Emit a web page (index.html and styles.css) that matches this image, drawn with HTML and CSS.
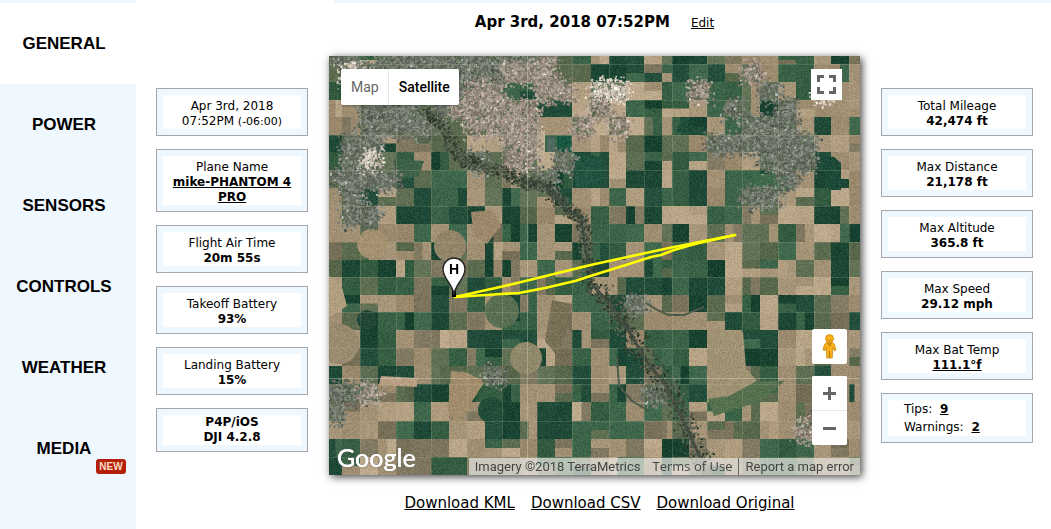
FILE: index.html
```html
<!DOCTYPE html>
<html lang="en">

<head>
  <meta charset="UTF-8" />
  <meta name="viewport" content="width=device-width, initial-scale=1" />
  <title>Flight - Apr 3rd, 2018 07:52PM</title>
  <link rel="stylesheet" href="styles.css">
</head>

<body>
  <div class="layout">
    <nav class="sidebar">
      <a href="#general" class="active">GENERAL</a>
      <a href="#power">POWER</a>
      <a href="#sensors">SENSORS</a>
      <a href="#controls">CONTROLS</a>
      <a href="#weather">WEATHER</a>
      <a href="#media">MEDIA<span class="badge">NEW</span></a>
    </nav>

    <main class="content">
      <div class="top-strip"></div>

      <div class="columns">
        <section class="stats">
          <div class="card"><div>Apr 3rd, 2018<br>07:52PM <small>(-06:00)</small></div></div>
          <div class="card"><div>Plane Name<br><a href="#plane">mike-PHANTOM 4 PRO</a></div></div>
          <div class="card"><div>Flight Air Time<br><b>20m 55s</b></div></div>
          <div class="card"><div>Takeoff Battery<br><b>93%</b></div></div>
          <div class="card"><div>Landing Battery<br><b>15%</b></div></div>
          <div class="card tight"><div><b>P4P/iOS<br>DJI 4.2.8</b></div></div>
        </section>

        <section class="flight">
          <div class="title">
            <h1>Apr 3rd, 2018 07:52PM</h1>
            <a href="#edit">Edit</a>
          </div>

          <div class="map">
            <canvas id="terrain" class="terrain" width="531" height="419"></canvas>
            <svg class="overlay" viewBox="0 0 531 419" preserveAspectRatio="xMidYMid slice">
              <g fill="none" stroke="#ffff00" stroke-width="2.6" stroke-linecap="round" stroke-linejoin="round">
                <path d="M126 241 L180 229 L266 208 L340 192 L406 179" />
                <path d="M126 241 L172 238 L190 237 L216 232 L246 225 L271 217 L300 208 L322 201 L332 199 L345 194 L366 188 L406 179" />
              </g>
              <path d="M123 233 h4 v8 h-4z" fill="#000" />
              <path d="M125 239 C124 228 114 223 114 213 A11 11 0 0 1 136 213 C136 223 126 228 125 239z" fill="#fff" stroke="#222" stroke-width="1.4" />
              <text x="125" y="218" text-anchor="middle" class="pin-label">H</text>
            </svg>

            <div class="map-type">
              <button type="button">Map</button>
              <button type="button" class="selected">Satellite</button>
            </div>

            <button type="button" class="map-btn fullscreen" aria-label="Fullscreen">
              <svg width="19" height="19" viewBox="0 0 19 19" fill="none" stroke="#666" stroke-width="3">
                <path d="M1.500 7V1.500H7M12 1.500h5.500V7M17.500 12v5.500H12M7 17.500H1.500V12" />
              </svg>
            </button>

            <div class="map-tools">
              <button type="button" class="map-btn pegman" aria-label="Street View">
                <svg width="15" height="25" viewBox="0 0 15 25" stroke="#c78a14" stroke-width=".8">
                  <path d="M4.500 8.500h6l2 1.800 1.500 5.700-1.800.8-1.400-3.500-.6 10.700H4.800l-.6-10.700-1.400 3.500L1 16l1.500-5.700z" fill="#fbb117" />
                  <path d="M7.500 17v7" stroke="#9c6a10" />
                  <path d="M5 9l2.500 3.500L10 9z" fill="#e28c10" />
                  <circle cx="7.500" cy="4.600" r="4" fill="#fbb117" />
                  <path d="M4.500 5.500q3 2.500 6 0" fill="none" />
                </svg>
              </button>
              <div class="zoom">
                <button type="button" aria-label="Zoom in">
                  <svg width="13" height="13" viewBox="0 0 13 13"><path d="M0 5h5V0h3v5h5v3H8v5H5V8H0z" fill="#666" /></svg>
                </button>
                <button type="button" aria-label="Zoom out">
                  <svg width="13" height="13" viewBox="0 0 13 13"><path d="M0 5h13v3H0z" fill="#666" /></svg>
                </button>
              </div>
            </div>

            <div class="logo">Google</div>
            <div class="credits">
              <span>Imagery ©2018 TerraMetrics</span>
              <a href="#terms" class="terms">Terms of Use</a>
              <a href="#report" class="report">Report a map error</a>
            </div>
          </div>

          <div class="downloads">
            <a href="#kml">Download KML</a>
            <a href="#csv">Download CSV</a>
            <a href="#original">Download Original</a>
          </div>
        </section>

        <section class="stats">
          <div class="card"><div>Total Mileage<br><b>42,474 ft</b></div></div>
          <div class="card"><div>Max Distance<br><b>21,178 ft</b></div></div>
          <div class="card"><div>Max Altitude<br><b>365.8 ft</b></div></div>
          <div class="card"><div>Max Speed<br><b>29.12 mph</b></div></div>
          <div class="card"><div>Max Bat Temp<br><a href="#temp">111.1°f</a></div></div>
          <div class="card notes"><div>Tips: <a href="#tips">9</a><br>Warnings: <a href="#warnings">2</a></div></div>
        </section>
      </div>
    </main>
  </div>

  <script src="map.js"></script>
</body>

</html>
```

FILE: styles.css
```css
* {
  box-sizing: border-box;
}

body {
  margin: 0;
  background: #fff;
  color: #000;
  font-family: Verdana, "DejaVu Sans", sans-serif;
  font-size: 12px;
  line-height: 15px;
}

a {
  color: inherit;
}

button {
  padding: 0;
  border: none;
  background: #fff;
  cursor: pointer;
}

.layout {
  display: flex;
  min-height: 100vh;
}

.sidebar {
  flex: 0 0 136px;
  padding-top: 3px;
  background: #f0f8ff;
}

.sidebar a {
  position: relative;
  display: flex;
  align-items: center;
  justify-content: center;
  height: 81px;
  padding-right: 8px;
  font-family: "Liberation Sans", Arial, sans-serif;
  font-size: 17px;
  font-weight: bold;
  text-decoration: none;
}

.sidebar a.active {
  background: #fff;
}

.badge {
  position: absolute;
  right: 10px;
  bottom: 15px;
  width: 30px;
  border-radius: 3px;
  background: #b4200c;
  color: #fbdcc0;
  font-size: 10px;
  line-height: 15px;
  text-align: center;
}

.content {
  flex: 1;
  min-width: 0;
}

.top-strip {
  height: 3px;
  margin-left: 198px;
  background: #f0f8ff;
}

.columns {
  display: flex;
  gap: 21px;
  padding: 0 18px 0 20px;
}

.stats {
  flex: 0 0 152px;
  display: flex;
  flex-direction: column;
  gap: 13px;
  padding-top: 85px;
}

.card {
  padding: 6px;
  border: 1px solid #a2a8ad;
  background: #f0f8ff;
  text-align: center;
}

.card div {
  padding-top: 4px;
  background: #fff;
}

.card small {
  font-size: 11px;
}

.card a {
  font-weight: bold;
}

.card.tight div {
  padding: 0;
}

.card.notes div {
  padding: 0 16px;
  line-height: 18px;
  text-align: left;
}

.card.notes a {
  margin-left: 4px;
}

.flight {
  flex: 1;
  min-width: 0;
}

.title {
  display: flex;
  align-items: baseline;
  justify-content: center;
  gap: 21px;
  margin-bottom: 14px;
  line-height: 38px;
}

.title h1 {
  margin: 0;
  font-size: 15px;
}

.map {
  position: relative;
  height: 419px;
  background: #5f7253;
  box-shadow: 2px 2px 8px #444;
  font-family: Roboto, Arial, sans-serif;
}

.terrain,
.overlay {
  position: absolute;
  top: 0;
  left: 0;
  width: 100%;
  height: 100%;
  object-fit: cover;
}

.pin-label {
  font-family: "Liberation Sans", Arial, sans-serif;
  font-size: 14px;
  font-weight: bold;
}

.map-type {
  position: absolute;
  top: 13px;
  left: 12px;
  display: flex;
  border-radius: 2px;
  overflow: hidden;
  box-shadow: 0 1px 3px rgba(0, 0, 0, 0.3);
}

.map-type button {
  height: 36px;
  padding: 0 9px 0 10px;
  color: #666;
  font-family: inherit;
  font-size: 14px;
}

.map-type .selected {
  border-left: 1px solid #e6e6e6;
  color: #000;
  font-weight: 500;
}

.map-btn {
  display: flex;
  align-items: center;
  justify-content: center;
}

.fullscreen {
  position: absolute;
  top: 13px;
  right: 18px;
  width: 31px;
  height: 31px;
}

.map-tools {
  position: absolute;
  right: 13px;
  bottom: 30px;
  display: flex;
  flex-direction: column;
  gap: 12px;
  width: 35px;
}

.pegman {
  height: 35px;
  border-radius: 2px;
}

.zoom {
  display: flex;
  flex-direction: column;
  border-radius: 2px;
  background: #fff;
  overflow: hidden;
}

.zoom button {
  display: flex;
  align-items: center;
  justify-content: center;
  height: 34px;
}

.zoom button + button {
  height: 35px;
  border-top: 1px solid #e6e6e6;
}

.logo {
  position: absolute;
  left: 8px;
  bottom: 4px;
  color: #fff;
  font-family: Lato, sans-serif;
  font-size: 25px;
  font-weight: 500;
  line-height: 28px;
  text-shadow: 0 0 1px #fff, 0 0 2px rgba(0, 0, 0, 0.5);
}

.credits {
  position: absolute;
  right: 0;
  bottom: 0;
  display: flex;
  background: rgba(235, 235, 230, 0.7);
  color: #444;
  font-size: 13px;
  line-height: 17px;
  white-space: nowrap;
}

.credits span,
.credits a {
  padding: 0 6px;
  text-decoration: none;
}

.credits .terms {
  font-family: "Open Sans", sans-serif;
}

.credits .report {
  border-left: 1px solid #666;
}

.downloads {
  display: flex;
  justify-content: center;
  gap: 16px;
  padding: 18px 0 18px 10px;
  font-size: 15px;
  line-height: 20px;
}
```

FILE: map.js
```js
// Satellite ground cover, one character per quarter-section of farmland
// D/G/g greens, t/l/b dry fields, u/U/w built-up areas
const rows = [
  'uuGuuuuuuuuuUgGlDDlgDDgbttGGtDb',
  'gwuuuuuuuuUUUggDDDbGDGDtUtGGtGt',
  'GtuuuuuuUUGGUUlwwltGGUGGtutGwtt',
  'ltuuuguUUUUUDDlUlGDGGtGutDutttt',
  'ttuuuuggUUUUttUlUlGtDDtGuuutDtG',
  'DuutbgggllUUGGtttgDggtuuuuuutlt',
  'GuwgGtGgugUUluDDlgGgGGbtluuuDtt',
  'uuuuDgGGtgtguGDDlDDlGDtGGGutDlt',
  'tuDlgDGDtgGggDttGlDGGDtGuutlGlt',
  'tuulDDGDDtDgtgtGbbDlllGGtgllDgt',
  'ttgttGtGtbDDtDbGGGtgDtgbgtGtlGD',
  'bgttgtDgtltGttgDGtGbGGtlggGtgDg',
  'gDGDGgbbgtbtGtGDttGGGGDlgGtgtDg',
  'tGgGGbGgDGbGgGGtgDDDGDDlbgttlDt',
  'lDtttbDbGtDGtlGGDutgbDgtDlDDgbt',
  'tgDGDGDgbtDGtbtGGgttttgDGlDDgbD',
  'btDGtbllDDDDtbtGDtGGGDttDDtlbtt',
  'lbDGbtgGGDgDlbGtDDGGGlttDDttgtb',
  'DtgDDtgggugbggDttDbGDGttgGtgDtt',
  'uuUtgDDtGGGttbDtDbuGGDttGGtbgtt',
  'ubtllGlttDDtDDbGGtGgGlGGgltbutt',
  'tttbGDGtlDDtDDGGGGbtgtgggltUutt',
  'GGblbbbltGgtGbGttblDDbtlbGGGtbt',
  'DGltbbGGbbbtGGgtGGtDgbttbGGgttg'
];

const colX = [0, 13, 31, 49, 67, 85, 102, 120, 138, 156, 173, 191, 208, 226, 243, 262,
  280, 297, 315, 333, 343, 360, 378, 396, 413, 431, 449, 467, 485, 502, 520, 531];
const rowY = [0, 8, 26, 44, 61, 79, 96, 114, 132, 150, 168, 186, 204, 221, 239, 256,
  274, 292, 310, 328, 346, 365, 383, 401, 419];

const colors = {
  D: [30, 72, 54],
  G: [57, 98, 70],
  g: [92, 109, 82],
  t: [160, 143, 114],
  l: [182, 163, 134],
  b: [124, 116, 92],
  u: [112, 118, 108],
  U: [160, 146, 134],
  w: [212, 200, 188]
};

const canvas = document.getElementById('terrain');
const ctx = canvas.getContext('2d');

let seed = 7;
function rand() {
  seed = (seed * 16807) % 2147483647;
  return seed / 2147483647;
}

function shade(c, amount) {
  return `rgb(${c.map(v => Math.round(v + amount)).join(',')})`;
}

function drawFields() {
  rows.forEach((row, r) => {
    [...row].forEach((key, c) => {
      const x = colX[c], y = rowY[r];
      const w = colX[c + 1] - x, h = rowY[r + 1] - y;
      const town = 'uUw'.includes(key);
      ctx.fillStyle = shade(colors[town ? 'g' : key], rand() * 16 - 8);
      ctx.fillRect(x, y, w, h);

      // some sections are split into smaller fields
      if (!town && rand() < 0.25) {
        const other = key === 'D' ? 'G' : 'Dgtlb'[Math.floor(rand() * 5)];
        ctx.fillStyle = shade(colors[other], rand() * 12 - 6);
        if (rand() < 0.5) ctx.fillRect(x, y + h / 2, w, h / 2);
        else ctx.fillRect(x, y, w / 2, h);
      }
    });
  });
}

// blocks spill over the section edges so that towns have ragged borders
function drawTowns() {
  rows.forEach((row, r) => {
    [...row].forEach((key, c) => {
      if (!'uUw'.includes(key)) return;
      const w = colX[c + 1] - colX[c], h = rowY[r + 1] - rowY[r];
      for (let n = 0; n < w * h / 2; n++) {
        const x = colX[c] + w / 2 + (rand() + rand() - 1) * w * 0.9;
        const y = rowY[r] + h / 2 + (rand() + rand() - 1) * h * 0.9;
        const bright = rand() < 0.05 ? 50 : 0;
        ctx.fillStyle = shade(colors[key], rand() * 70 - 35 + bright);
        ctx.fillRect(x, y, 1 + rand() * 2, 1 + rand() * 2);
      }
    });
  });
}

function drawPatch(points, color) {
  ctx.fillStyle = color;
  ctx.beginPath();
  points.forEach(([x, y]) => ctx.lineTo(x, y));
  ctx.fill();
}

function drawCircle(x, y, r, color) {
  ctx.fillStyle = color;
  ctx.beginPath();
  ctx.arc(x, y, r, 0, Math.PI * 2);
  ctx.fill();
}

// pivot irrigation and other irregular fields
function drawIrregular() {
  drawCircle(10, 288, 20, '#988b70');
  drawCircle(197, 302, 16, '#8e8769');
  drawCircle(173, 255, 17, '#586f51');
  drawCircle(38, 264, 10, '#214536');
  drawCircle(162, 354, 13, '#204c38');
  drawCircle(43, 188, 15, '#a3916f');
  drawCircle(121, 190, 16, '#91856a');
  drawPatch([[122, 315], [136, 316], [156, 325], [142, 347], [128, 367], [119, 355]], '#a18d6c');
  drawPatch([[380, 275], [414, 276], [417, 312], [428, 325], [395, 346], [379, 342]], '#9f9273');
  drawPatch([[379, 343], [400, 340], [428, 325], [456, 325], [430, 346], [385, 360]], '#55704f');
  drawPatch([[216, 285], [223, 244], [244, 248], [239, 270], [228, 300]], '#786f57');
  drawPatch([[0, 220], [12, 228], [18, 250], [4, 259], [0, 262]], '#b09f7e');
  drawPatch([[142, 156], [164, 154], [172, 170], [158, 188], [145, 180]], '#9c876a');
  drawPatch([[424, 118], [460, 118], [460, 135], [430, 134]], '#416b4c');
  drawPatch([[490, 99], [505, 101], [512, 107], [512, 134], [500, 134]], '#1d4a38');
  drawPatch([[350, 67], [378, 72], [378, 80], [348, 76]], '#1f4c38');
  drawPatch([[213, 48], [243, 53], [243, 58], [213, 55]], '#1f4c38');
  drawPatch([[252, 100], [273, 100], [273, 131], [246, 131], [246, 106]], '#205441');
  drawPatch([[218, 82], [226, 81], [226, 96], [218, 96]], '#4f6a5e');
  drawPatch([[228, 80], [242, 80], [242, 96], [228, 96]], '#1b5841');
  drawPatch([[208, 72], [216, 74], [216, 104], [208, 104]], '#c1af96');
  drawPatch([[65, 103], [95, 105], [90, 120], [68, 125]], '#3e6248');
  drawPatch([[52, 320], [88, 322], [88, 331], [50, 329]], '#b99d82');
}

function drawLine(points, color, width) {
  ctx.strokeStyle = color;
  ctx.lineWidth = width;
  ctx.beginPath();
  points.forEach(([x, y]) => ctx.lineTo(x, y));
  ctx.stroke();
}

function drawBanks(points, spread) {
  for (let i = 0; i < points.length - 1; i++) {
    const [x1, y1] = points[i];
    const [x2, y2] = points[i + 1];
    for (let n = 0; n < 110; n++) {
      const t = rand();
      ctx.fillStyle = shade([84, 94, 78], rand() * 70 - 48);
      ctx.fillRect(x1 + (x2 - x1) * t + (rand() + rand() - 1) * spread, y1 + (y2 - y1) * t + (rand() + rand() - 1) * spread, 2, 2);
    }
  }
}

function drawRiver() {
  const north = [[96, 55], [110, 66], [120, 86], [132, 102], [150, 110], [175, 116],
    [195, 126], [211, 126], [224, 136], [236, 152], [252, 162], [256, 190], [263, 228]];
  const south = [[263, 228], [282, 250], [299, 274], [319, 307], [338, 331], [354, 364], [370, 399], [378, 419]];
  drawBanks(north, 8);
  drawLine(north.slice(6), '#3b4940', 2);
  drawBanks(south, 14);
  drawLine(south, '#454c42', 3);
  drawLine([[317, 247], [330, 255], [340, 259], [355, 259], [375, 251]], '#4b5748', 2);
  drawLine([[288, 301], [290, 330], [303, 345], [318, 354]], '#4b5748', 2);
}

function drawRoads() {
  ctx.fillStyle = 'rgba(190, 180, 150, 0.22)';
  for (let i = 2; i < colX.length - 1; i += 2) ctx.fillRect(colX[i], 0, 1, 419);
  for (let i = 1; i < rowY.length - 1; i += 2) ctx.fillRect(0, rowY[i], 531, 1);
  ctx.fillStyle = 'rgba(220, 230, 215, 0.35)';
  ctx.fillRect(198, 0, 1, 419);
  ctx.fillRect(0, 322, 531, 1);
}

function addGrain() {
  const image = ctx.getImageData(0, 0, 531, 419);
  for (let i = 0; i < image.data.length; i += 4) {
    const n = rand() * 24 - 12;
    image.data[i] += n;
    image.data[i + 1] += n;
    image.data[i + 2] += n;
  }
  ctx.putImageData(image, 0, 0);
}

// soften the imagery slightly
function soften() {
  ctx.filter = 'blur(0.6px)';
  ctx.drawImage(canvas, 0, 0);
  ctx.filter = 'none';
}

drawFields();
drawIrregular();
drawTowns();
drawRiver();
addGrain();
soften();
drawRoads();
```
